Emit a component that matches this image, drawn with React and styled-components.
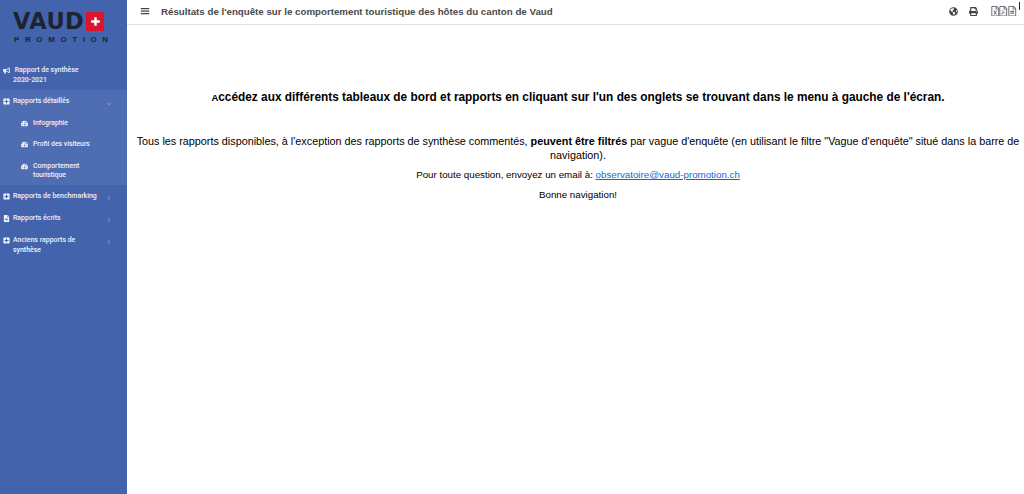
import React from "react";
import styled, { createGlobalStyle } from "styled-components";
import { FaBullhorn, FaPlusSquare, FaFileAlt, FaTachometerAlt, FaGlobeAmericas, FaPrint, FaRegFileExcel, FaRegFilePdf, FaRegFileAlt } from "react-icons/fa";
import { FiChevronDown, FiChevronRight, FiMenu } from "react-icons/fi";

const GlobalStyle = createGlobalStyle`
  html, body { margin: 0; padding: 0; background: #fff; }
  body { font-family: "Liberation Sans", Arial, sans-serif; }
`;

const Page = styled.div`
  display: flex;
  width: 1024px;
  height: 494px;
  overflow: hidden;
`;

const Sidebar = styled.aside`
  width: 127px;
  flex: none;
  background: #4363ad;
  color: #eef2fa;
  font-family: "Roboto", "Liberation Sans", sans-serif;
`;

const Logo = styled.div`
  height: 52px;
  padding: 12px 0 0 13px;
  box-sizing: border-box;
`;

const LogoTop = styled.div`
  display: flex;
  align-items: center;
  gap: 2px;
`;

const LogoWord = styled.span`
  font: 700 22.5px/19px "DejaVu Sans", sans-serif;
  letter-spacing: 0.4px;
  color: #1d2330;
`;

const LogoFlag = styled.span`
  width: 18px;
  height: 19px;
  background: #d8172f;
  display: flex;
  align-items: center;
  justify-content: center;
`;

const LogoSub = styled.div`
  font: 700 8px/8px "Liberation Sans", sans-serif;
  letter-spacing: 5.6px;
  color: #1d2330;
  margin: 5px 0 0 1px;
  white-space: nowrap;
`;

const MainItem = styled.div`
  position: relative;
  display: flex;
  gap: 3px;
  padding: ${(p) => p.$pad || "8px 24px 0 3px"};
  font-size: 6.95px;
  font-weight: 500;
  line-height: 9.5px;
`;

const ItemIcon = styled.span`
  flex: none;
  width: 7px;
  padding-top: 1px;
  font-size: 7px;
  line-height: 0;
  color: #f2f4fa;
`;

const Caret = styled.span`
  position: absolute;
  right: 15px;
  top: ${(p) => p.$top || 10}px;
  font-size: 6px;
  line-height: 0;
  color: #cdd7ec;
`;

const Group = styled.div`
  background: #4e6db3;
  height: 95px;
  box-sizing: border-box;
  padding-top: 7px;
  margin-top: 5px;
`;

const SubItem = styled.div`
  display: flex;
  gap: 5px;
  padding: 0 18px 0 21px;
  margin-top: ${(p) => p.$mt}px;
  font-size: 6.85px;
  font-weight: 500;
  line-height: 9.5px;
`;

const Main = styled.main`
  flex: 1;
  min-width: 0;
`;

const Topbar = styled.header`
  height: 25px;
  box-sizing: border-box;
  border-bottom: 1px solid #e3e3e3;
  display: flex;
  align-items: center;
  padding: 0 4px 2px 13px;
  color: #444;
`;

const Title = styled.h1`
  margin: 0 0 0 11px;
  flex: 1;
  font: 700 9.72px "Liberation Sans", Arial, sans-serif;
  color: #4a4a4a;
`;

const Tools = styled.div`
  display: flex;
  align-items: center;
  font-size: 9px;
  color: #444;
`;

const Tool = styled.span`
  display: flex;
  margin-right: ${(p) => p.$gap}px;
`;

const DocTool = styled(Tool)`
  font-size: 10.5px;
  color: #6f7378;
`;

const CursorMark = styled.span`
  width: 1px;
  height: 8px;
  background: #222;
  align-self: flex-start;
  margin-top: -4px;
`;

const Content = styled.section`
  text-align: center;
  color: #000;
  padding-left: 5px;
`;

const Lead = styled.p`
  margin: 65px 0 0;
  font-size: 11.85px;
  line-height: 14px;
  font-weight: 700;
`;

const SmallA = styled.span`
  font-size: 9.5px;
`;

const Para = styled.p`
  margin: ${(p) => p.$mt}px 0 0;
  font-size: ${(p) => p.$size}px;
  line-height: 14px;
`;

const Mail = styled.a`
  color: #0b6bd6;
  text-decoration: underline;
`;

const Flag = () => (
  <svg width="11" height="11" viewBox="0 0 18 18">
    <path fill="#fff" d="M7 2h4v5h5v4h-5v5H7v-5H2V7h5z" />
  </svg>
);

export default function App() {
  return (
    <Page>
      <GlobalStyle />
      <Sidebar>
        <Logo>
          <LogoTop>
            <LogoWord>VAUD</LogoWord>
            <LogoFlag><Flag /></LogoFlag>
          </LogoTop>
          <LogoSub>PROMOTION</LogoSub>
        </Logo>
        <MainItem $pad="14px 24px 0 3px">
          <ItemIcon><FaBullhorn /></ItemIcon>
          <span>&nbsp;Rapport de synthèse<br />2020-2021</span>
        </MainItem>
        <Group>
          <MainItem $pad="0 24px 0 3px">
            <ItemIcon><FaPlusSquare /></ItemIcon>
            <span>Rapports détaillés</span>
            <Caret $top={4}><FiChevronDown /></Caret>
          </MainItem>
          <SubItem $mt={12}>
            <ItemIcon><FaTachometerAlt /></ItemIcon>
            <span>Infographie</span>
          </SubItem>
          <SubItem $mt={12}>
            <ItemIcon><FaTachometerAlt /></ItemIcon>
            <span>Profil des visiteurs</span>
          </SubItem>
          <SubItem $mt={12}>
            <ItemIcon><FaTachometerAlt /></ItemIcon>
            <span>Comportement<br />touristique</span>
          </SubItem>
        </Group>
        <MainItem $pad="7px 24px 0 3px">
          <ItemIcon><FaPlusSquare /></ItemIcon>
          <span>Rapports de benchmarking</span>
          <Caret $top={10}><FiChevronRight /></Caret>
        </MainItem>
        <MainItem $pad="12px 24px 0 3px">
          <ItemIcon><FaFileAlt /></ItemIcon>
          <span>Rapports écrits</span>
          <Caret $top={15}><FiChevronRight /></Caret>
        </MainItem>
        <MainItem $pad="13px 24px 0 3px">
          <ItemIcon><FaPlusSquare /></ItemIcon>
          <span>Anciens rapports de<br />synthèse</span>
          <Caret $top={16}><FiChevronRight /></Caret>
        </MainItem>
      </Sidebar>
      <Main>
        <Topbar>
          <FiMenu size={10} strokeWidth={3} />
          <Title>Résultats de l'enquête sur le comportement touristique des hôtes du canton de Vaud</Title>
          <Tools>
            <Tool $gap={11}><FaGlobeAmericas /></Tool>
            <Tool $gap={12}><FaPrint /></Tool>
            <DocTool $gap={-2}><FaRegFileExcel /></DocTool>
            <DocTool $gap={-2}><FaRegFilePdf /></DocTool>
            <DocTool $gap={2}><FaRegFileAlt /></DocTool>
            <CursorMark />
          </Tools>
        </Topbar>
        <Content>
          <Lead><SmallA>A</SmallA>ccédez aux différents tableaux de bord et rapports en cliquant sur l'un des onglets se trouvant dans le menu à gauche de l'écran.</Lead>
          <Para $mt={29} $size={10.8}>
            Tous les rapports disponibles, à l'exception des rapports de synthèse commentés, <b>peuvent être filtrés</b> par vague d'enquête (en utilisant le filtre "Vague d'enquête" situé dans la barre de navigation).
          </Para>
          <Para $mt={6} $size={9.75}>Pour toute question, envoyez un email à: <Mail href="#">observatoire@vaud-promotion.ch</Mail></Para>
          <Para $mt={6} $size={9.75}>Bonne navigation!</Para>
        </Content>
      </Main>
    </Page>
  );
}
